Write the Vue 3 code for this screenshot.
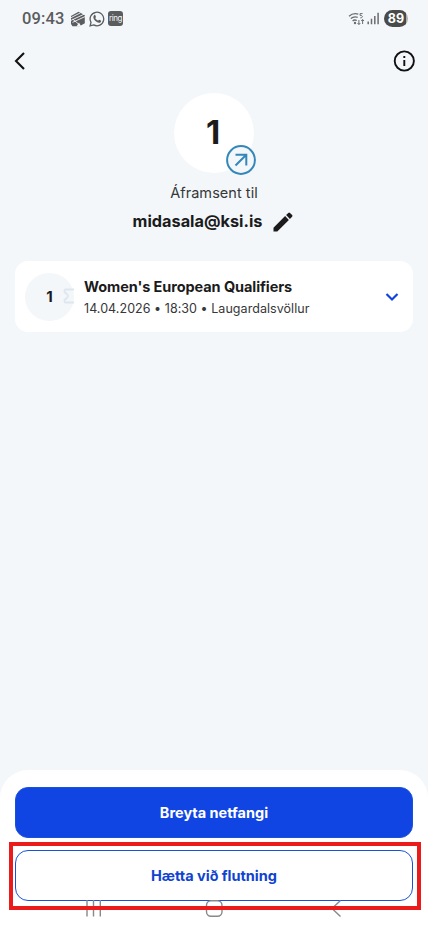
<script setup>
const event = {
  count: 1,
  title: "Women's European Qualifiers",
  details: '14.04.2026 • 18:30 • Laugardalsvöllur',
}
const email = 'midasala@ksi.is'
</script>

<template>
  <div class="screen">
    <header class="status">
      <span class="clock">09:43</span>
      <svg class="status-icon box" width="16" height="16" viewBox="0 0 16 16">
        <path d="M8.500 .8 14.800 4.300v8L9.500 15.200H2.500L1 13V5z" fill="#5b5c5d" />
        <path d="M.5 6.900 10.500 1.800M.5 9.600 14.500 3M2.500 11.400 15 5.600M2.800 8.200l7.400 6.200" stroke="#f3f7fa" stroke-width=".9" fill="none" />
        <path d="m9 11.500 2.200 4H6.500z" fill="#f3f7fa" />
      </svg>
      <svg class="status-icon" width="16" height="16" viewBox="0 0 16 16">
        <path d="M1.100 14.900 2 11.300a6.800 6.800 0 1 1 2.600 2.600z" fill="none" stroke="#5b5c5d" stroke-width="1.300" />
        <path d="M5.100 4.200c.5-.5 1-.4 1.200.1l.6 1.400c.2.5-.5 1-.6 1.300.6 1.300 1.500 2.100 2.800 2.600.4-.1.800-1 1.200-.8l1.500.7c.6.3.3 1.300-.2 1.800-1.600 1.300-4.200-.1-5.700-1.700C4.400 8 3.700 5.600 5.100 4.200z" fill="#5b5c5d" />
      </svg>
      <span class="ring"><span>ring</span></span>
      <svg class="wifi" width="17" height="14" viewBox="0 0 17 14">
        <g fill="none" stroke="#6b6c6d" stroke-width="1.300">
          <path d="M1 4.200C3.700 1.800 7 1.100 10.300 2.100M2.800 6.600c2-1.700 4.300-2.100 6.900-1.200M4.600 8.900c1.200-1 2.700-1.200 4.200-.4" />
          <path d="M14.600 1.600h-2.500v1.800c2.800-.2 3.200 2.500.2 2.500M10.900 8v4.500M9.500 11l1.400 1.500 1.400-1.500M14.600 12V7.600M13.200 9l1.400-1.500L16 9" stroke-width="1" />
        </g>
        <circle cx="7" cy="11" r="1.200" fill="#6b6c6d" />
      </svg>
      <svg class="signal" width="13" height="13" viewBox="0 0 13 13">
        <path d="M1.200 12.300V9.500M4.500 12.300V6.800M7.800 12.300V4M11.100 12.300V.7" stroke="#6b6c6d" stroke-width="1.500" />
      </svg>
      <span class="battery">89</span>
    </header>

    <nav class="topbar">
      <svg width="12" height="18" viewBox="0 0 12 18">
        <path d="M10 1 2 9l8 8" fill="none" stroke="#111" stroke-width="2.100" />
      </svg>
      <svg width="22" height="22" viewBox="0 0 22 22">
        <circle cx="11.300" cy="11" r="9.600" fill="none" stroke="#111" stroke-width="1.900" />
        <path d="M11.300 10v6M11.300 6v2" stroke="#111" stroke-width="1.900" />
      </svg>
    </nav>

    <main class="content">
      <div class="total">
        <span>1</span>
        <svg class="forward" width="30" height="30" viewBox="0 0 30 30">
          <circle cx="15" cy="15" r="13.900" fill="#f3f7fa" stroke="#3587b9" stroke-width="2" />
          <path d="M9.500 20.500 20.300 9.700M9.500 9.700h10.800v10.800" fill="none" stroke="#3587b9" stroke-width="2" />
        </svg>
      </div>
      <p class="caption">Áframsent til</p>
      <div class="recipient">
        <strong>{{ email }}</strong>
        <svg class="pencil" width="20" height="20" viewBox="0 0 20 20" fill="#1b1b1c">
          <path d="M.5 15.700 12.100 4.100l3.800 3.800L4.300 19.500H.5zM13.100 3.100 15.300.9a1.200 1.200 0 0 1 1.700 0l2.100 2.100a1.200 1.200 0 0 1 0 1.700l-2.200 2.200z" />
        </svg>
      </div>

      <section class="card">
        <div class="badge">
          {{ event.count }}
          <svg class="ticket" width="11" height="16" viewBox="0 0 11 16">
            <path d="M11 1.500H2.600a1 1 0 0 0-1 1v1.900c2.200 1.200 3.300 2.400 3.300 3.600s-1.100 2.400-3.300 3.600v1.900a1 1 0 0 0 1 1H11" fill="none" stroke="#dee6ee" stroke-width="1.900" />
          </svg>
        </div>
        <div class="info">
          <h2>{{ event.title }}</h2>
          <p>{{ event.details }}</p>
        </div>
        <svg class="chevron" width="14" height="10" viewBox="0 0 14 10">
          <path d="m1.500 2 5.500 5.500L12.500 2" fill="none" stroke="#1044df" stroke-width="2.200" />
        </svg>
      </section>
    </main>

    <footer class="sheet">
      <button class="primary">Breyta netfangi</button>
      <button class="secondary">Hætta við flutning</button>
      <svg class="system" width="428" height="18" viewBox="0 0 428 18">
        <path d="M87 0v16.500M93.500 0v16.500M100.300 0v16.500M340.500 .5 332 8.500l8.500 8" fill="none" stroke="#88898a" stroke-width="1.400" />
        <rect x="206.500" y=".7" width="15.500" height="15.500" rx="4.500" fill="none" stroke="#88898a" stroke-width="1.400" />
      </svg>
      <div class="highlight"></div>
    </footer>
  </div>
</template>

<style>
body {
  background: #f3f7fa;
}
</style>

<style scoped>
* {
  box-sizing: border-box;
}
.screen {
  width: 428px;
  height: 930px;
  overflow: hidden;
  display: flex;
  flex-direction: column;
  background: #f3f7fa;
  color: #1b1b1c;
  font-family: Inter, "Liberation Sans", sans-serif;
}
svg {
  display: block;
  flex: none;
}
h2,
p {
  margin: 0;
}
.status {
  height: 36px;
  padding: 1px 20px 0 22px;
  display: flex;
  align-items: center;
  color: #5b5c5d;
}
.clock {
  width: 48px;
  font: 500 16.500px/20px Roboto, sans-serif;
  letter-spacing: 0.100px;
}
.status-icon {
  margin-right: 3px;
}
.ring {
  display: flex;
  justify-content: center;
  width: 15px;
  height: 15px;
  border-radius: 3px;
  background: #5b5c5d;
  color: #f3f7fa;
  font-size: 8px;
  line-height: 14px;
  letter-spacing: -0.400px;
}
.wifi {
  margin-left: auto;
}
.signal {
  margin: 0 4px 0 2px;
}
.battery {
  width: 24px;
  height: 17px;
  border-radius: 9px;
  background: linear-gradient(90deg, #494a49 90%, #acaeb0 90%);
  color: #fff;
  font-size: 12.500px;
  font-weight: 700;
  line-height: 17px;
  text-align: center;
}
.topbar {
  height: 50px;
  padding: 0 13px 0 14px;
  display: flex;
  align-items: center;
  justify-content: space-between;
}
.content {
  flex: 1;
  padding: 7px 15px 0;
  display: flex;
  flex-direction: column;
  align-items: center;
}
.total {
  position: relative;
  width: 80px;
  height: 80px;
  padding-right: 2px;
  border-radius: 50%;
  background: #fff;
  font-size: 33px;
  font-weight: 700;
  line-height: 79px;
  text-align: center;
}
.forward {
  position: absolute;
  right: -2px;
  bottom: -2px;
}
.caption {
  margin-top: 10px;
  font-size: 14.500px;
  line-height: 20px;
  letter-spacing: 0.050px;
  color: #363738;
}
.recipient {
  margin-top: 7px;
  padding-right: 2px;
  height: 22px;
  display: flex;
  align-items: center;
  gap: 11px;
  font-size: 16.300px;
}
.recipient strong {
  font-weight: 700;
  line-height: 20px;
}
.pencil {
  margin-top: 2px;
}
.card {
  width: 398px;
  height: 71px;
  margin-top: 29px;
  padding: 0 14px 0 10px;
  display: flex;
  align-items: center;
  border-radius: 13px;
  background: #fff;
}
.badge {
  position: relative;
  width: 49px;
  height: 48px;
  border-radius: 50%;
  background: #f3f7fa;
  font-size: 15px;
  font-weight: 700;
  line-height: 48px;
  text-align: center;
}
.ticket {
  position: absolute;
  right: 0;
  top: 15px;
}
.info {
  flex: 1;
  margin-left: 10px;
  padding-top: 1px;
  white-space: nowrap;
}
.info h2 {
  font-size: 14.500px;
  font-weight: 700;
  line-height: 22px;
  letter-spacing: -0.080px;
}
.info p {
  font-size: 12.500px;
  line-height: 21px;
  letter-spacing: 0.050px;
  color: #363738;
}
.sheet {
  position: relative;
  height: 160px;
  padding: 17px 15px 0;
  display: flex;
  flex-direction: column;
  border-radius: 28px 28px 0 0;
  background: #fff;
}
button {
  flex: none;
  height: 51px;
  padding: 0;
  border: 1px solid #1b50d9;
  border-radius: 13px;
  font: 700 14.500px/20px Inter, sans-serif;
}
.primary {
  margin-bottom: 12px;
  background: #1044e3;
  color: #fff;
}
.secondary {
  background: #fff;
  color: #1044cf;
}
.system {
  margin: -1px -15px 0;
}
.highlight {
  position: absolute;
  left: 9px;
  top: 72px;
  width: 412px;
  height: 68px;
  border: 4px solid #eb1b1b;
  pointer-events: none;
}
</style>
